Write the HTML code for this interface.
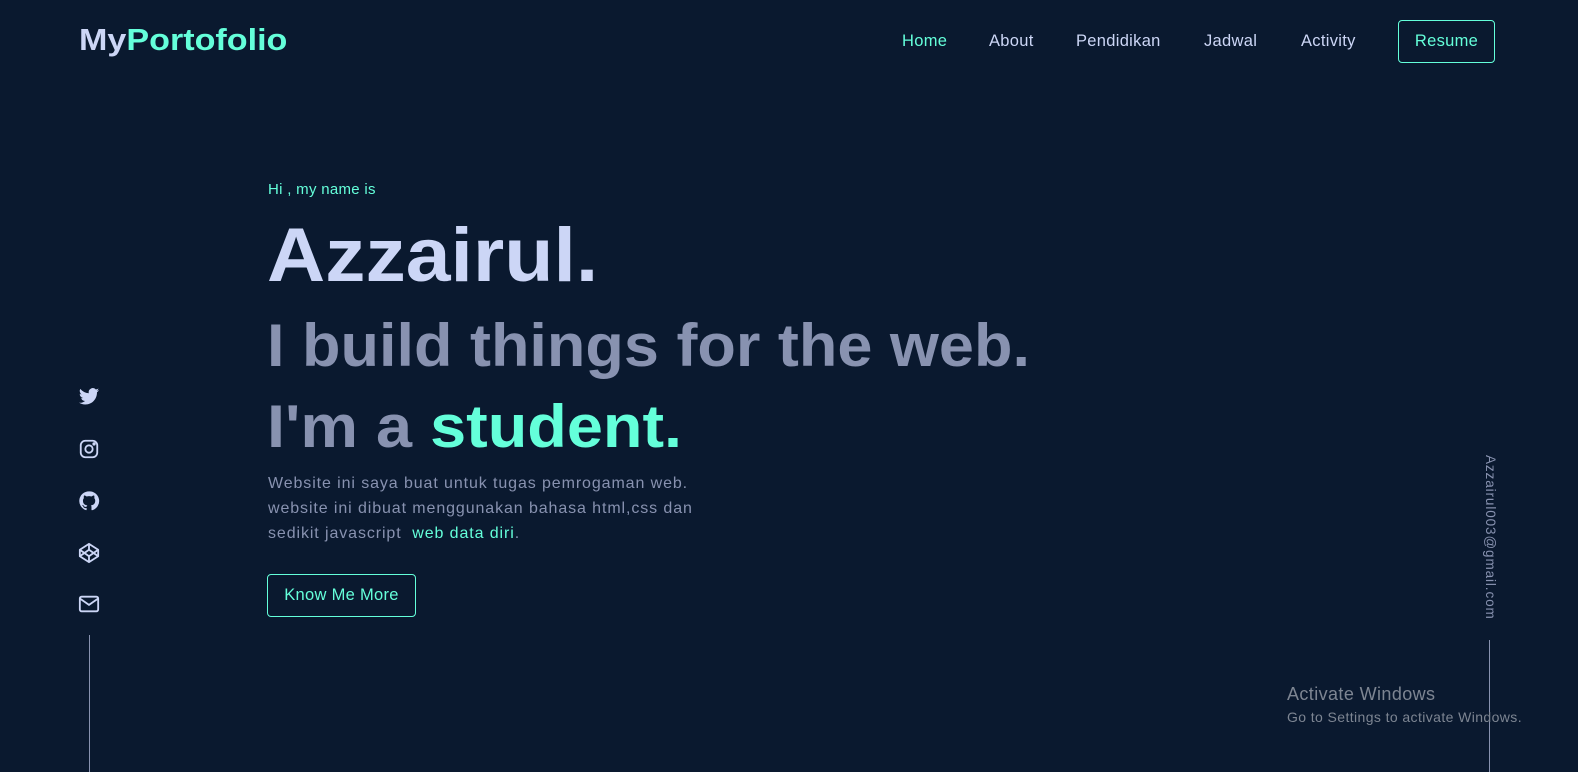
<!DOCTYPE html>
<html><head><meta charset="utf-8"><style>
*{margin:0;padding:0;box-sizing:border-box}
body{width:1578px;height:772px;background:#0a192f;font-family:"Liberation Sans",sans-serif;position:relative;overflow:hidden;color:#8892b0}
.logo{position:absolute;left:79px;top:22px;font-size:31px;font-weight:bold;color:#ccd6f6;transform:scaleX(1.1);transform-origin:left}
.logo span{color:#64ffda}
.nav{position:absolute;top:32px;font-size:16.5px;color:#ccd6f6;letter-spacing:0.3px}
.btn{position:absolute;border:1px solid #64ffda;border-radius:4px;color:#64ffda;font-size:16.5px;display:flex;align-items:center;justify-content:center;letter-spacing:0.3px}
.t{position:absolute;left:267px;white-space:nowrap;font-weight:bold;transform-origin:left}
.ic{position:absolute;left:78px;width:22px;height:22px}
.line{position:absolute;width:1px;background:#8892b0}
</style></head><body>
<div class="logo">My<span>Portofolio</span></div>
<div class="nav" style="left:902px;color:#64ffda">Home</div>
<div class="nav" style="left:989px">About</div>
<div class="nav" style="left:1076px">Pendidikan</div>
<div class="nav" style="left:1204px">Jadwal</div>
<div class="nav" style="left:1301px">Activity</div>
<div class="btn" style="left:1398px;top:20px;width:97px;height:43px">Resume</div>

<div style="position:absolute;left:268px;top:181px;font-size:15px;color:#64ffda;letter-spacing:0.3px">Hi , my name is</div>
<div class="t" style="top:212px;font-size:76px;color:#ccd6f6;transform:scaleX(1.06)">Azzairul.</div>
<div class="t" style="top:311px;font-size:60px;color:#8892b0;transform:scaleX(1.05)">I build things for the web.</div>
<div class="t" style="top:392px;font-size:60px;color:#8892b0;transform:scaleX(1.08)">I'm a <span style="color:#64ffda">student.</span></div>
<div style="position:absolute;left:268px;top:471px;font-size:16px;line-height:25px;color:#8892b0;width:500px;letter-spacing:0.9px">Website ini saya buat untuk tugas pemrogaman web.<br>website ini dibuat menggunakan bahasa html,css dan<br>sedikit javascript &nbsp;<span style="color:#64ffda">web data diri</span>.</div>
<div class="btn" style="left:267px;top:574px;width:149px;height:43px">Know Me More</div>

<svg class="ic" style="top:386px" viewBox="0 0 24 24" fill="#ccd6f6"><path d="M23 4.5a9 9 0 0 1-2.6.7 4.5 4.5 0 0 0 2-2.5 9 9 0 0 1-2.9 1.1A4.5 4.5 0 0 0 11.8 7.9 12.8 12.8 0 0 1 2.5 3.2a4.5 4.5 0 0 0 1.4 6 4.5 4.5 0 0 1-2-.6 4.5 4.5 0 0 0 3.6 4.5 4.5 4.5 0 0 1-2 .1 4.5 4.5 0 0 0 4.2 3.1A9 9 0 0 1 1 18.2a12.8 12.8 0 0 0 6.9 2c8.3 0 12.8-6.9 12.8-12.8v-.6A9 9 0 0 0 23 4.5z"/></svg>
<svg class="ic" style="top:438px" viewBox="0 0 24 24" fill="none" stroke="#ccd6f6" stroke-width="2"><rect x="3" y="3" width="18" height="18" rx="5"/><circle cx="12" cy="12" r="4"/><circle cx="17.5" cy="6.5" r="0.8" fill="#ccd6f6"/></svg>
<svg class="ic" style="top:490px" viewBox="0 0 24 24" fill="#ccd6f6"><path d="M12 1.5A10.5 10.5 0 0 0 8.7 22c.5.1.7-.2.7-.5v-1.8c-2.9.6-3.5-1.4-3.5-1.4-.5-1.2-1.2-1.5-1.2-1.5-.9-.6.1-.6.1-.6 1 .1 1.6 1.1 1.6 1.1.9 1.6 2.5 1.1 3.1.9.1-.7.4-1.1.7-1.4-2.3-.3-4.8-1.2-4.8-5.2 0-1.1.4-2.1 1.1-2.8-.1-.3-.5-1.3.1-2.8 0 0 .9-.3 2.9 1.1a10 10 0 0 1 5.2 0c2-1.4 2.9-1.1 2.9-1.1.6 1.5.2 2.5.1 2.8.7.7 1.1 1.7 1.1 2.8 0 4-2.5 4.9-4.8 5.2.4.3.7 1 .7 1.9v2.9c0 .3.2.6.7.5A10.5 10.5 0 0 0 12 1.5z"/></svg>
<svg class="ic" style="top:542px" viewBox="0 0 24 24" fill="none" stroke="#ccd6f6" stroke-width="2" stroke-linejoin="round"><path d="M12 2l10 6.5v7L12 22 2 15.5v-7z"/><path d="M12 22v-6.5M22 8.5l-10 7-10-7M2 15.5l10-7 10 7M12 2v6.5"/></svg>
<svg class="ic" style="top:593px" viewBox="0 0 24 24" fill="none" stroke="#ccd6f6" stroke-width="2"><rect x="2" y="4" width="20" height="16" rx="2"/><path d="M2 6l10 7 10-7"/></svg>
<div class="line" style="left:89px;top:635px;height:137px"></div>

<div style="position:absolute;left:1483px;top:455px;writing-mode:vertical-rl;font-size:13.5px;letter-spacing:0.9px;color:#8892b0">Azzairul003@gmail.com</div>
<div class="line" style="left:1489px;top:640px;height:132px"></div>

<div style="position:absolute;left:1287px;top:684px;font-size:18px;color:#7d8592;letter-spacing:0.4px">Activate Windows</div>
<div style="position:absolute;left:1287px;top:709px;font-size:14px;color:#7d8592;letter-spacing:0.4px">Go to Settings to activate Windows.</div>
</body></html>
